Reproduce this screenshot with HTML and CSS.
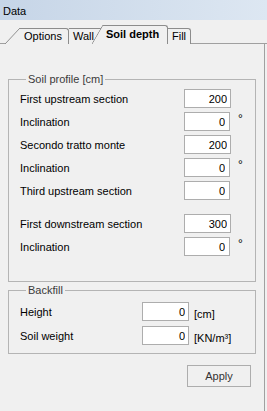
FILE: index.html
```html
<!DOCTYPE html>
<html>
<head>
<meta charset="utf-8">
<link rel="stylesheet" href="styles.css">
</head>
<body>
<div class="title">Data</div>
<div class="tabstrip">
  <div class="tab options">Options</div>
  <div class="tab wall">Wall</div>
  <div class="tab active">Soil depth</div>
  <div class="tab fill">Fill</div>
</div>
<div class="pane">
  <fieldset class="group profile">
    <legend>Soil profile [cm]</legend>
    <div class="row"><span class="label">First upstream section</span><input class="field" type="text" value="200"></div>
    <div class="row"><span class="label">Inclination</span><input class="field short" type="text" value="0"><span class="deg">°</span></div>
    <div class="row"><span class="label">Secondo tratto monte</span><input class="field" type="text" value="200"></div>
    <div class="row"><span class="label">Inclination</span><input class="field short" type="text" value="0"><span class="deg">°</span></div>
    <div class="row"><span class="label">Third upstream section</span><input class="field short" type="text" value="0"></div>
    <div class="row spaced"><span class="label">First downstream section</span><input class="field" type="text" value="300"></div>
    <div class="row"><span class="label">Inclination</span><input class="field short" type="text" value="0"><span class="deg">°</span></div>
  </fieldset>
  <fieldset class="group backfill">
    <legend>Backfill</legend>
    <div class="row"><span class="label narrow">Height</span><input class="field" type="text" value="0"><span class="unit">[cm]</span></div>
    <div class="row"><span class="label narrow">Soil weight</span><input class="field" type="text" value="0"><span class="unit">[KN/m³]</span></div>
  </fieldset>
  <div class="actions"><button class="apply" type="button">Apply</button></div>
</div>
</body>
</html>
```
FILE: styles.css
```css
* { box-sizing: border-box; }
html, body { margin: 0; padding: 0; }
body {
  width: 267px;
  height: 411px;
  overflow: hidden;
  background: #f0f0f0;
  font-family: "Liberation Sans", Arial, sans-serif;
  font-size: 11px;
  color: #000;
}
.title {
  height: 20px;
  padding: 2px 0 0 3px;
  line-height: 18px;
  background: linear-gradient(90deg, #c6d5e7, #dde7f2);
}
.tabstrip {
  height: 24px;
  display: flex;
  align-items: flex-end;
  padding-left: 20px;
  border-bottom: 1px solid #a0a0a0;
}
.tab {
  position: relative;
  height: 16px;
  line-height: 14px;
  border-top: 1px solid #8c8c8c;
  border-right: 1px solid #8c8c8c;
  border-top-right-radius: 3px;
  background: #f0f0f0;
  margin-bottom: -1px;
  white-space: nowrap;
}
.tab::before {
  content: "";
  position: absolute;
  top: -1px;
  bottom: 0;
}
.options { padding: 0 6px 0 4px; width: 49px; }
.options::before {
  left: -15px;
  width: 15px;
  background: linear-gradient(to top left, #f0f0f0 calc(50% - 0.7px), #8c8c8c 50%, transparent calc(50% + 0.7px));
}
.wall { padding: 0 0 0 4px; width: 34px; border-right: none; }
.active {
  z-index: 2;
  height: 19px;
  line-height: 17px;
  font-weight: bold;
  padding: 0 5px 0 3px;
  width: 65px;
}
.active::before {
  left: -11px;
  width: 11px;
  background: linear-gradient(to top left, #f0f0f0 calc(50% - 0.7px), #8c8c8c 50%, transparent calc(50% + 0.7px));
}
.fill { padding: 0 4px; width: 23px; }
.pane {
  height: 367px;
  margin-right: 2px;
  border-right: 1px solid #a0a0a0;
  padding: 0 8px;
  display: flex;
  flex-direction: column;
}
.group {
  margin: 0;
  border: 1px solid #b4b4b4;
  padding: 4px 8px 25px 11px;
  display: flex;
  flex-direction: column;
  gap: 4px;
  min-width: 0;
}
.group legend {
  margin-left: 6px;
  padding: 0 2px;
  line-height: 12px;
  color: #3a3a3a;
}
.profile { margin-top: 29px; }
.backfill { margin-top: 2px; padding-top: 6px; padding-bottom: 8px; gap: 5px; }
.row {
  display: flex;
  align-items: center;
  height: 19px;
}
.row.spaced { margin-top: 10px; }
.label { flex: 0 0 164px; }
.label.narrow { flex-basis: 122px; }
.field {
  width: 47px;
  height: 19px;
  margin: 0;
  border: 1px solid #adadad;
  background: #fff;
  padding: 0 3px 0 2px;
  text-align: right;
  font-family: "Liberation Sans", Arial, sans-serif;
  font-size: 11px;
  color: #000;
  outline: none;
}
.field.short { width: 46px; padding-right: 4px; }
.deg {
  margin-left: 8px;
  line-height: 19px;
  align-self: flex-start;
  position: relative;
  top: -2px;
  font-size: 12px;
}
.unit {
  margin-left: 5px;
  align-self: flex-end;
  line-height: 13px;
}
.actions {
  display: flex;
  justify-content: flex-end;
  margin-top: 11px;
  padding-right: 5px;
}
.apply {
  width: 64px;
  height: 22px;
  margin: 0;
  border: 1px solid #adadad;
  background: #f0f0f0;
  font-family: "Liberation Sans", Arial, sans-serif;
  font-size: 11px;
  color: #333;
}
```
